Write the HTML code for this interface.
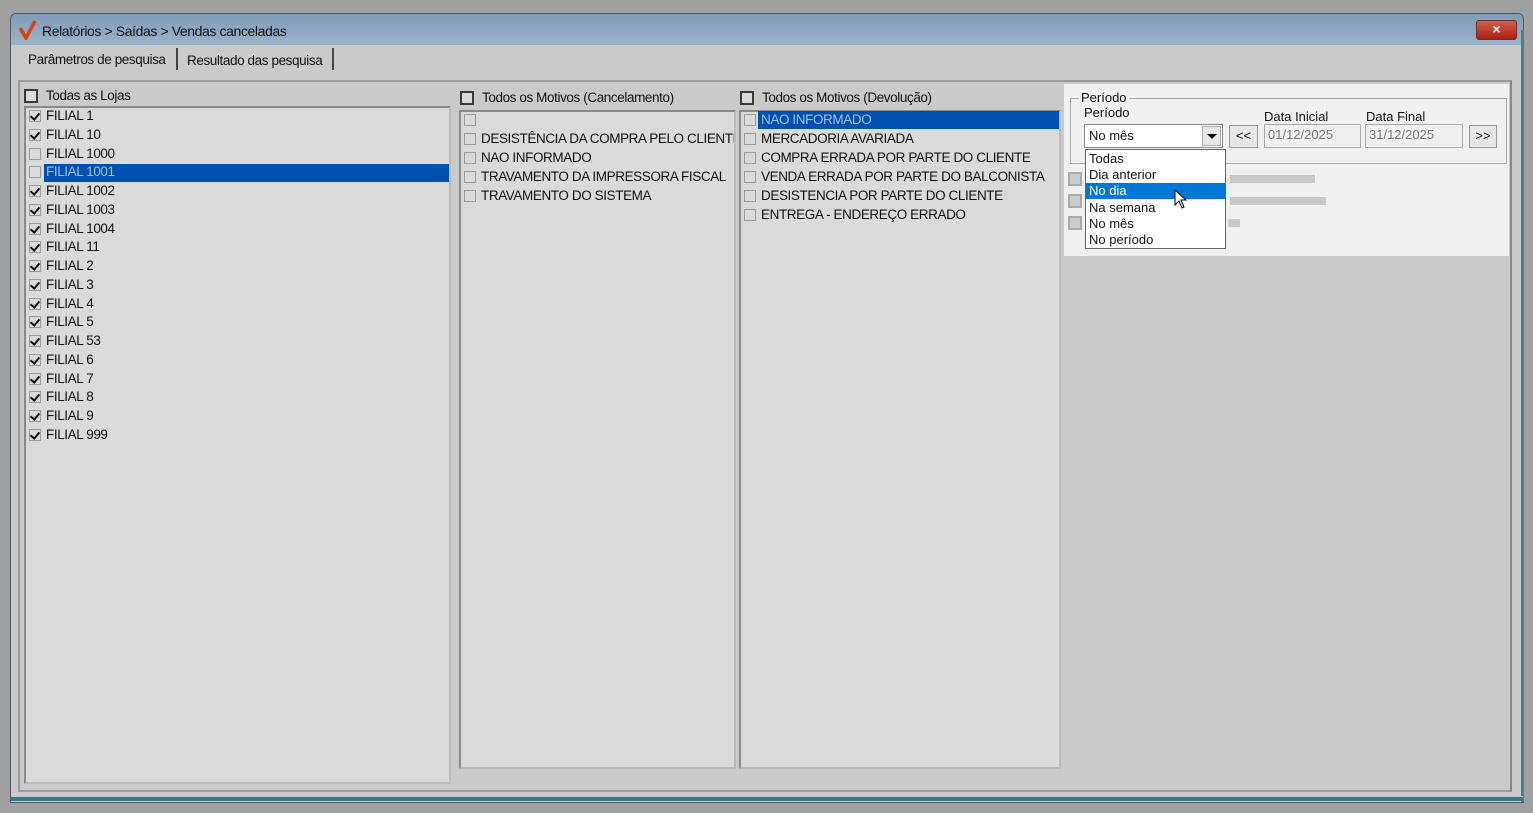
<!DOCTYPE html>
<html><head><meta charset="utf-8"><style>
*{margin:0;padding:0;box-sizing:border-box}
body{width:1533px;height:813px;background:#a0a0a0;position:relative;overflow:hidden;font-family:"Liberation Sans",sans-serif;font-size:13px;color:#111}
.a{position:absolute}
.t{position:absolute;white-space:nowrap;letter-spacing:-0.4px;font-size:13.5px;line-height:16px}
.cb{position:absolute;width:12px;height:12px;border:1px solid #9a9a9a;background:#dadada}
.hb{position:absolute;width:14px;height:14px;border:2px solid #3a3a3a;background:#dadada}
.ck::after{content:"";position:absolute;left:2px;top:0px;width:4px;height:7px;border:solid #111;border-width:0 2px 2px 0;transform:rotate(40deg)}
.lb{position:absolute;background:#dadada;border:2px solid #8a8a8a;border-right-color:#bbb;border-bottom-color:#bbb}
.sel{position:absolute;background:#0050b0;color:#9cc0f0}
.r{font-size:13px;line-height:16px;letter-spacing:0}
</style></head><body>
<div class="a" style="left:10px;top:13px;width:1514px;height:790px;background:#cacaca;border:1px solid #505a60;border-radius:6px 6px 0 0"></div>
<div class="a" style="left:11px;top:14px;width:1512px;height:31px;background:linear-gradient(#7f9bb8,#9cb3c9);border-radius:5px 5px 0 0"></div>
<div class="a" style="left:1521px;top:30px;width:3px;height:772px;background:#4a7f8e"></div>
<div class="a" style="left:11px;top:796px;width:1512px;height:5px;background:#3b7888;border-top:1px solid #b8c8d0"></div>
<svg class="a" style="left:18px;top:20px" width="20" height="20"><path d="M2 8 L8 18 L17 1" stroke="#e04010" stroke-width="3.5" fill="none"/></svg>
<div class="t" style="left:42px;top:23px;font-size:14px">Relatórios &gt; Saídas &gt; Vendas canceladas</div>
<div class="a" style="left:1476px;top:20px;width:41px;height:20px;background:linear-gradient(#d06050,#a82010);border:1px solid #6a3030;border-radius:3px;color:#eee;font-size:14px;text-align:center;line-height:17px;font-weight:bold">×</div>
<div class="t" style="left:28px;top:52px">Parâmetros de pesquisa</div>
<div class="a" style="left:176px;top:48px;width:2px;height:22px;background:#444"></div>
<div class="t" style="left:187px;top:53px">Resultado das pesquisa</div>
<div class="a" style="left:332px;top:48px;width:2px;height:22px;background:#444"></div>
<div class="a" style="left:18px;top:80px;width:1494px;height:712px;border:2px solid #9a9a9a;border-right-color:#888;background:#cacaca"></div>
<div class="hb" style="left:24px;top:89px"></div>
<div class="t" style="left:46px;top:88px">Todas as Lojas</div>
<div class="lb" style="left:24px;top:106px;width:427px;height:678px"></div>
<div class="sel" style="left:44px;top:164px;width:405px;height:18px"></div>
<div class="hb" style="left:460px;top:91px"></div>
<div class="t" style="left:482px;top:90px">Todos os Motivos (Cancelamento)</div>
<div class="lb" style="left:459px;top:110px;width:277px;height:659px"></div>
<div class="hb" style="left:740px;top:91px"></div>
<div class="t" style="left:762px;top:90px">Todos os Motivos (Devolução)</div>
<div class="lb" style="left:739px;top:110px;width:322px;height:659px"></div>
<div class="sel" style="left:758px;top:111px;width:301px;height:18px"></div>
<div id="L"></div>
<div class="a" style="left:1064px;top:84px;width:445px;height:172px;background:#f0f0f0"></div>
<div class="a" style="left:1070px;top:98px;width:437px;height:66px;border:1px solid #a8a8a8"></div>
<div class="t r" style="left:1079px;top:90px;background:#f0f0f0;padding:0 2px">Período</div>
<div class="t r" style="left:1084px;top:105px">Período</div>
<div class="t r" style="left:1264px;top:109px">Data Inicial</div>
<div class="t r" style="left:1366px;top:109px">Data Final</div>
<div class="a" style="left:1084px;top:124px;width:139px;height:24px;border:1px solid #888;background:#fff"></div>
<div class="t r" style="left:1089px;top:128px">No mês</div>
<div class="a" style="left:1202px;top:126px;width:19px;height:20px;background:#e6e6e6;border:1px solid #aaa"></div>
<div class="a" style="left:1207px;top:134px;border:5px solid transparent;border-top:5px solid #000;border-bottom:0"></div>
<div class="a" style="left:1229px;top:125px;width:29px;height:23px;background:#e6e6e6;border:1px solid #999;text-align:center;font-size:13px;line-height:20px">&lt;&lt;</div>
<div class="a" style="left:1264px;top:124px;width:97px;height:24px;border:1px solid #aaa;background:#f0f0f0"></div>
<div class="t r" style="left:1268px;top:127px;color:#777">01/12/2025</div>
<div class="a" style="left:1365px;top:124px;width:98px;height:24px;border:1px solid #aaa;background:#f0f0f0"></div>
<div class="t r" style="left:1369px;top:127px;color:#777">31/12/2025</div>
<div class="a" style="left:1469px;top:125px;width:28px;height:23px;background:#e6e6e6;border:1px solid #999;text-align:center;font-size:13px;line-height:20px">&gt;&gt;</div>
<div class="a" style="left:1068px;top:172px;width:14px;height:14px;background:#ccc;border:2px solid #aaa"></div>
<div class="a" style="left:1230px;top:175px;width:85px;height:8px;background:#c8c8c8"></div>
<div class="a" style="left:1068px;top:194px;width:14px;height:14px;background:#ccc;border:2px solid #aaa"></div>
<div class="a" style="left:1230px;top:197px;width:96px;height:8px;background:#c8c8c8"></div>
<div class="a" style="left:1068px;top:216px;width:14px;height:14px;background:#ccc;border:2px solid #aaa"></div>
<div class="a" style="left:1228px;top:219px;width:12px;height:8px;background:#c8c8c8"></div>
<div class="a" style="left:1085px;top:149px;width:141px;height:100px;background:#fff;border:1px solid #666"></div>
<div class="a" style="left:1086px;top:183px;width:139px;height:16px;background:#0078d7"></div>
<div class="t r" style="left:1089px;top:151px">Todas</div>
<div class="t r" style="left:1089px;top:167px">Dia anterior</div>
<div class="t r" style="left:1089px;top:183px;color:#fff">No dia</div>
<div class="t r" style="left:1089px;top:200px">Na semana</div>
<div class="t r" style="left:1089px;top:216px">No mês</div>
<div class="t r" style="left:1089px;top:232px">No período</div>
<svg class="a" style="left:1174px;top:189px" width="14" height="22"><path d="M1 1 L1 16 L5 12 L8 19 L10 18 L7 11 L12 11 Z" fill="#fff" stroke="#000" stroke-width="1"/></svg>
<script>
var L=["1","10","1000","1001","1002","1003","1004","11","2","3","4","5","53","6","7","8","9","999"],h="";
L.forEach(function(n,i){var y=108+i*18.75;var c=(n=="1000"||n=="1001")?"":" ck";
h+='<div class="cb'+c+'" style="left:29px;top:'+(y+2)+'px"></div><div class="t" style="left:46px;top:'+y+'px;'+(n=="1001"?"color:#9cc0f0":"")+'">FILIAL '+n+'</div>';});
var A=["","DESISTÊNCIA DA COMPRA PELO CLIENTE","NAO INFORMADO","TRAVAMENTO DA IMPRESSORA FISCAL","TRAVAMENTO DO SISTEMA"];
A.forEach(function(s,i){var y=112+i*18.9;h+='<div class="cb" style="left:464px;top:'+(y+2)+'px"></div><div class="t" style="left:481px;top:'+y+'px;width:253px;overflow:hidden">'+s+'</div>';});
var B=["NAO INFORMADO","MERCADORIA AVARIADA","COMPRA ERRADA POR PARTE DO CLIENTE","VENDA ERRADA POR PARTE DO BALCONISTA","DESISTENCIA POR PARTE DO CLIENTE","ENTREGA - ENDEREÇO ERRADO"];
B.forEach(function(s,i){var y=112+i*18.9;h+='<div class="cb" style="left:744px;top:'+(y+2)+'px"></div><div class="t" style="left:761px;top:'+y+'px;width:297px;overflow:hidden;'+(i==0?"color:#9cc0f0":"")+'">'+s+'</div>';});
document.getElementById("L").innerHTML=h;
</script>
</body></html>
